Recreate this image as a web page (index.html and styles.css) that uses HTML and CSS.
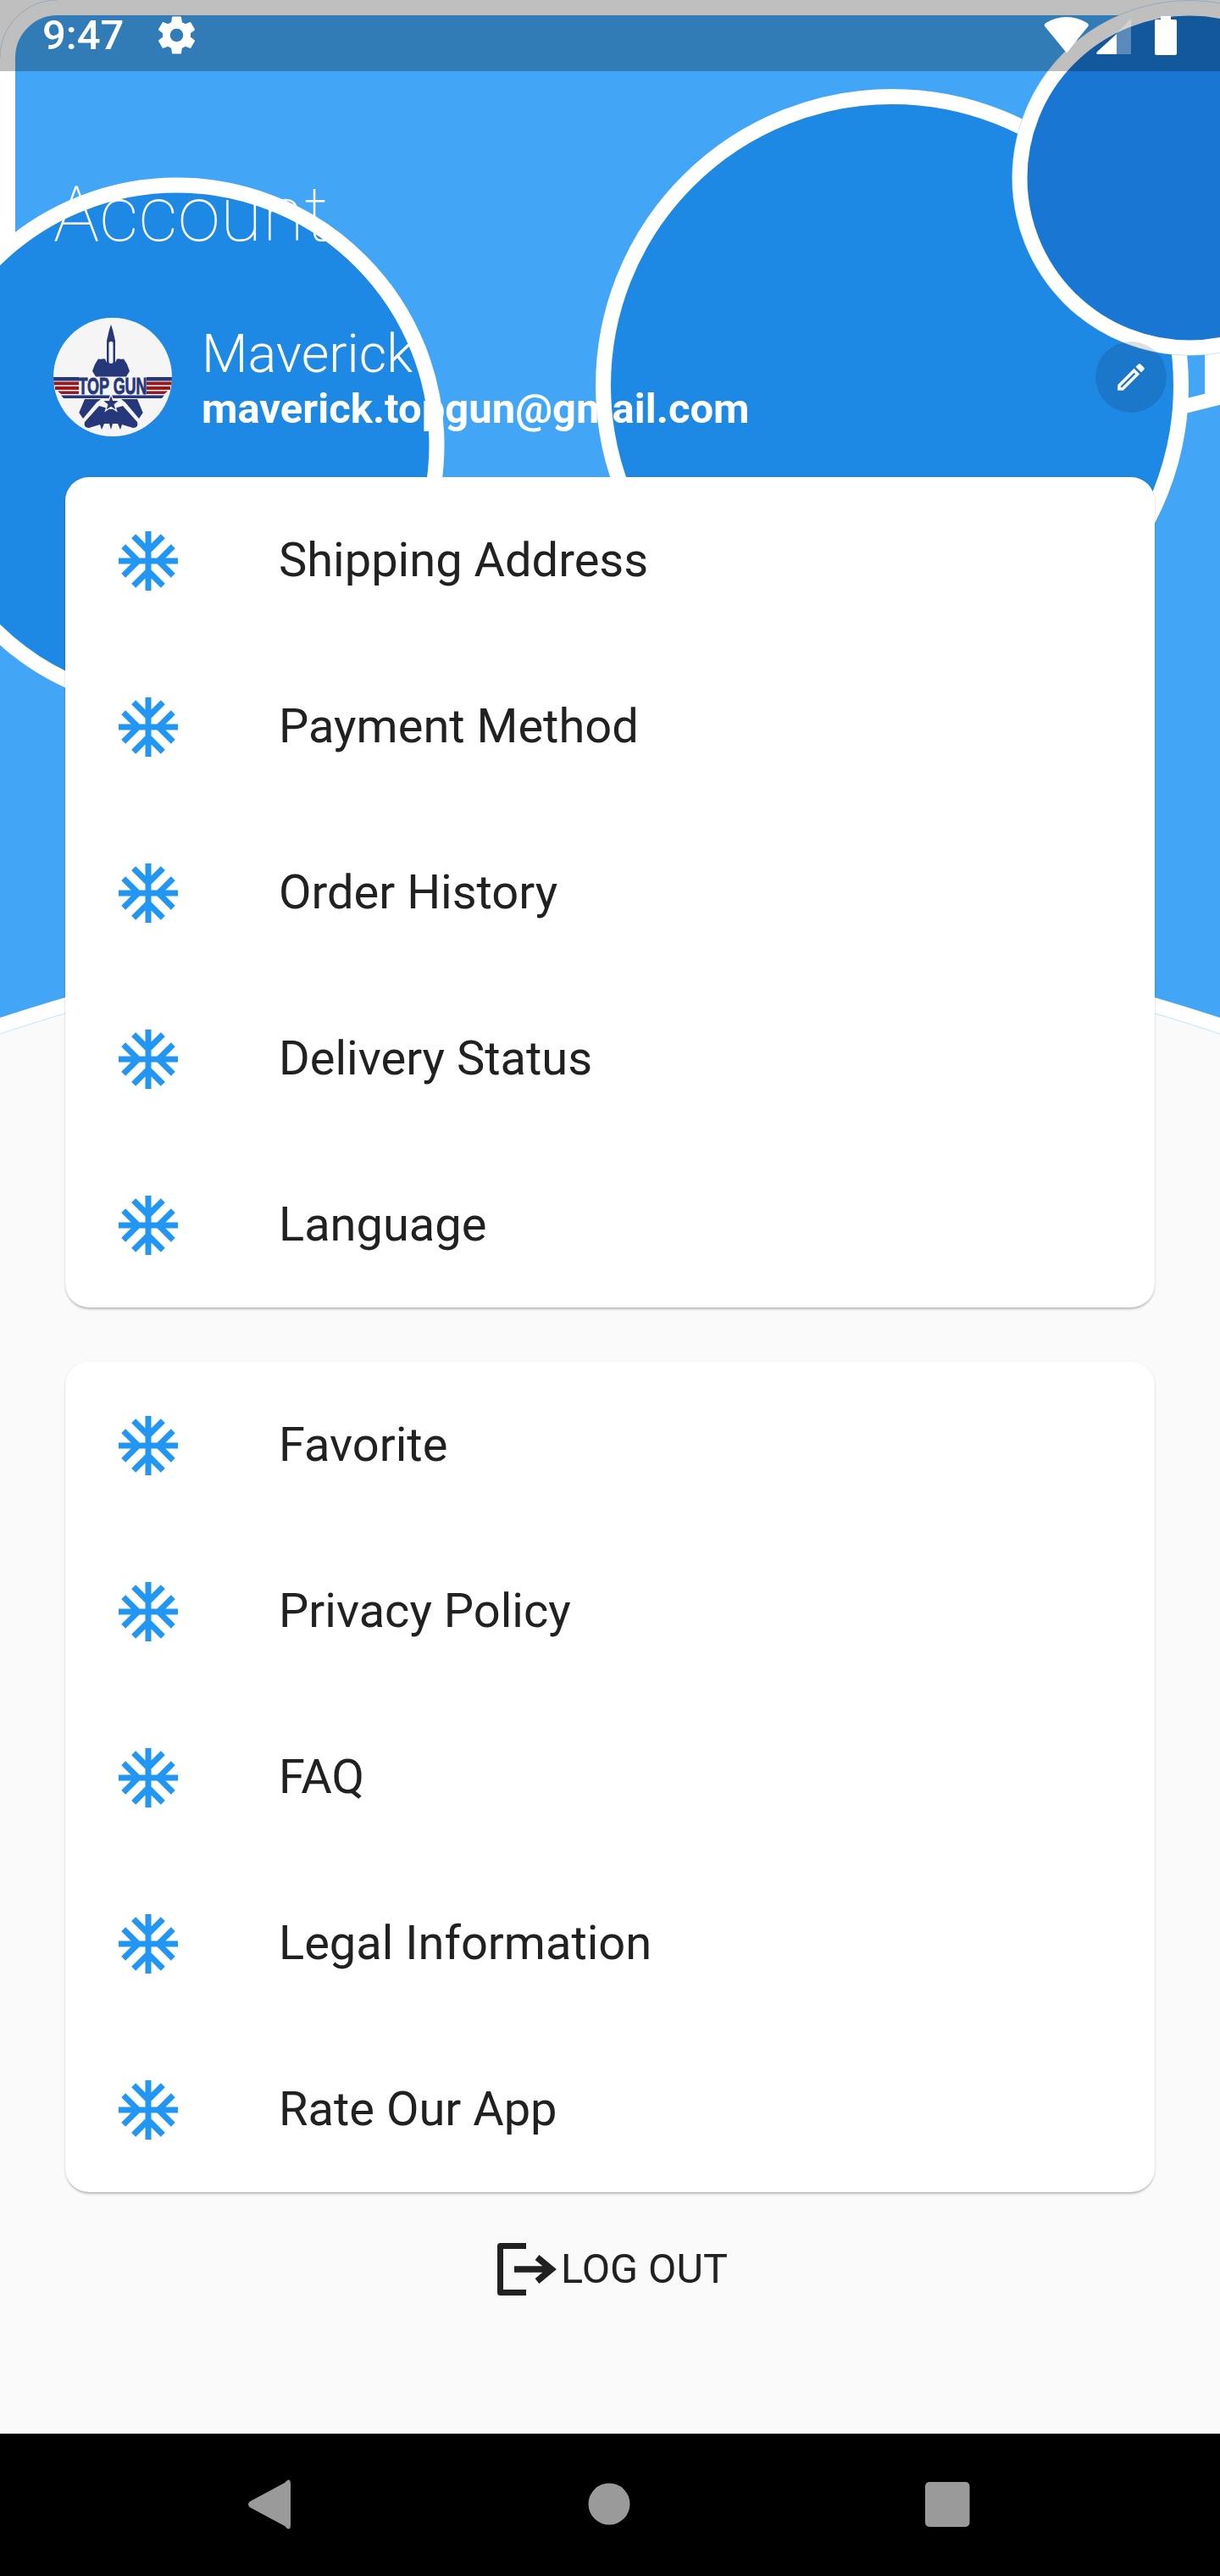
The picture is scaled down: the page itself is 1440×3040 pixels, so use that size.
FILE: index.html
```html
<!DOCTYPE html>
<html lang="en">
<head>
<meta charset="utf-8">
<title>Account</title>
<link rel="stylesheet" href="styles.css">
</head>
<body>
<svg class="art" width="1440" height="1300" viewBox="0 0 1440 1300" aria-hidden="true">
  <rect class="sky" width="1440" height="1300"/>
  <circle class="floor" cx="720" cy="3375" r="2281"/>
  <circle class="hairline" cx="720" cy="3375" r="2272"/>
  <rect class="corner" width="68" height="68"/>
  <path class="frame" d="M9 520V68A59 59 0 0 1 68 9H1431V466"/>
  <path class="hairline" d="M0 68A68 68 0 0 1 68 0"/>
  <path class="band" d="M1460 464L1380 484"/>
  <rect class="strip" x="1422" y="60" width="18" height="410"/>
  <circle class="disc" cx="209" cy="525" r="306.5"/>
  <circle class="disc" cx="1053" cy="455" r="341"/>
  <circle class="disc disc-dark" cx="1404" cy="210" r="200.5"/>
  <circle class="hairline" cx="1404" cy="210" r="209.5"/>
</svg>

<header class="status">
  <span class="time">9:47</span>
  <svg class="gear" width="53" height="53" viewBox="0 0 24 24"><path d="M19.43 12.98c.04-.32.07-.64.07-.98s-.03-.66-.07-.98l2.11-1.65c.19-.15.24-.42.12-.64l-2-3.46c-.12-.22-.39-.3-.61-.22l-2.49 1c-.52-.4-1.08-.73-1.69-.98l-.38-2.65C14.46 2.18 14.25 2 14 2h-4c-.25 0-.46.18-.49.42l-.38 2.65c-.61.25-1.17.59-1.69.98l-2.49-1c-.23-.09-.49 0-.61.22l-2 3.46c-.13.22-.07.49.12.64l2.11 1.65c-.04.32-.07.65-.07.98s.03.66.07.98l-2.11 1.65c-.19.15-.24.42-.12.64l2 3.46c.12.22.39.3.61.22l2.49-1c.52.4 1.08.73 1.69.98l.38 2.65c.03.24.24.42.49.42h4c.25 0 .46-.18.49-.42l.38-2.65c.61-.25 1.17-.59 1.69-.98l2.49 1c.23.09.49 0 .61-.22l2-3.46c.12-.22.07-.49-.12-.64l-2.11-1.65zM12 15.5c-1.93 0-3.5-1.57-3.5-3.5s1.57-3.5 3.5-3.5 3.5 1.57 3.5 3.5-1.57 3.5-3.5 3.5z"/></svg>
  <svg class="sys" width="158" height="48" viewBox="1232 18 158 48">
    <path d="M1259 62.5L1233.5 31.5Q1231.5 29 1234.5 27Q1258.5 13 1283 27Q1286 29 1284 31.5Z"/>
    <path class="sys-dim" d="M1318 39L1335 22V64H1318Z"/>
    <path d="M1318 40V64H1296Q1293 64 1295 61Z"/>
    <path d="M1370 19H1382V23H1387Q1389 23 1389 25V63Q1389 65 1387 65H1365Q1363 65 1363 63V25Q1363 23 1365 23H1370Z"/>
  </svg>
</header>

<main class="content">
  <h1 class="title">Account</h1>

  <section class="profile">
    <svg class="avatar" width="140" height="140" viewBox="0 0 140 140">
      <defs><clipPath id="avatar-clip"><circle cx="70" cy="70" r="70"/></clipPath></defs>
      <circle class="logo-bg" cx="70" cy="70" r="70"/>
      <g clip-path="url(#avatar-clip)">
        <path class="logo-navy" d="M68 8L70 14L73 27V53L75 48.5H78.5L80 49L83 48.5L87 55L90 63L86 69.5H50L46 63L49 55L53 48.5L56 49L57.5 48.5H61L63 53V27L66 14Z"/>
        <rect class="logo-white" x="65.5" y="28" width="5" height="26" rx="2"/>
        <rect class="logo-navy" x="0" y="70" width="30" height="4.5"/>
        <rect class="logo-navy" x="110" y="70" width="30" height="4.5"/>
        <rect class="logo-red" x="0" y="75.5" width="30" height="4"/>
        <rect class="logo-red" x="110" y="75.5" width="30" height="4"/>
        <rect class="logo-red" x="2" y="81" width="28" height="4"/>
        <rect class="logo-red" x="110" y="81" width="28" height="4"/>
        <path class="logo-red" d="M5 86.5H30V90H9Z"/>
        <path class="logo-red" d="M110 86.5H135L131 90H110Z"/>
        <path class="logo-navy" d="M9 91.5H131L128 95H12Z"/>
        <path class="logo-navy" d="M37 96H56L51 100L35 119L30.3 112Z"/>
        <path class="logo-navy" d="M99 96H80L85 100L101 119L105.7 112Z"/>
        <path class="logo-navy" d="M54 104L37 123Q35 130 42 130L55 126L57 132L60 125L66 125L68 132L70 125L76 125L79 132L81 126L94 130Q101 130 99 123L82 104L68 108Z"/>
        <polygon class="logo-star" points="68,90 70.6,97.4 78.5,97.6 72.3,102.4 74.5,109.9 68,105.5 61.5,109.9 63.7,102.4 57.5,97.6 65.4,97.4"/>
      </g>
      <text class="logo-text" x="29.5" y="89.5" textLength="81" lengthAdjust="spacingAndGlyphs">TOP GUN</text>
    </svg>
    <div class="who">
      <div class="name">Maverick</div>
      <div class="email">maverick.topgun@gmail.com</div>
    </div>
    <button class="edit" type="button" aria-label="Edit">
      <svg width="42" height="42" viewBox="0 0 24 24"><path d="M3 17.25V21h3.75L17.81 9.94l-3.75-3.75L3 17.25zM5.92 19H5v-.92l9.06-9.06.92.92L5.92 19zM20.71 5.63l-2.34-2.34c-.2-.2-.45-.29-.71-.29s-.51.1-.7.29l-1.83 1.83 3.75 3.75 1.83-1.83c.39-.39.39-1.02 0-1.41z"/></svg>
    </button>
  </section>

  <svg class="defs" width="0" height="0" aria-hidden="true">
    <symbol id="flake" viewBox="0 0 24 24"><path d="M22 11h-4.17l3.24-3.24-1.41-1.42L15 11h-2V9l4.66-4.66-1.42-1.41L13 6.17V2h-2v4.17L7.76 2.93 6.34 4.34 11 9v2H9L4.34 6.34 2.93 7.76 6.17 11H2v2h4.17l-3.24 3.24 1.41 1.42L9 13h2v2l-4.66 4.66 1.42 1.41L11 17.83V22h2v-4.17l3.24 3.24 1.42-1.41L13 15v-2h2l4.66 4.66 1.41-1.42L17.83 13H22z"/></symbol>
  </svg>

  <ul class="card card-first">
    <li class="row"><svg class="flake"><use href="#flake"/></svg><span>Shipping Address</span></li>
    <li class="row"><svg class="flake"><use href="#flake"/></svg><span>Payment Method</span></li>
    <li class="row"><svg class="flake"><use href="#flake"/></svg><span>Order History</span></li>
    <li class="row"><svg class="flake"><use href="#flake"/></svg><span>Delivery Status</span></li>
    <li class="row"><svg class="flake"><use href="#flake"/></svg><span>Language</span></li>
  </ul>

  <ul class="card card-second">
    <li class="row"><svg class="flake"><use href="#flake"/></svg><span>Favorite</span></li>
    <li class="row"><svg class="flake"><use href="#flake"/></svg><span>Privacy Policy</span></li>
    <li class="row"><svg class="flake"><use href="#flake"/></svg><span>FAQ</span></li>
    <li class="row"><svg class="flake"><use href="#flake"/></svg><span>Legal Information</span></li>
    <li class="row"><svg class="flake"><use href="#flake"/></svg><span>Rate Our App</span></li>
  </ul>

  <div class="logout">
    <svg width="72" height="66" viewBox="0 0 72 66"><path class="logout-bracket" d="M36 5.5H5.5V60.5H36"/><path class="logout-arrow" d="M22 33H64M49 19L66 33L49 47"/></svg>
    <span>LOG OUT</span>
  </div>
</main>

<nav class="nav">
  <svg width="1440" height="168" viewBox="0 0 1440 168">
    <path class="nav-key" d="M336 58Q343 50 343 60V107Q343 117 336 109L295 87Q291 83.5 295 80Z"/>
    <circle class="nav-key" cx="719" cy="83" r="24.5"/>
    <rect class="nav-key" x="1092" y="57" width="52.5" height="53" rx="5"/>
  </svg>
</nav>
</body>
</html>
```

FILE: styles.css
```css
* { box-sizing: border-box; }
html, body { margin: 0; padding: 0; }
body {
  position: relative;
  width: 1440px;
  height: 3040px;
  display: flex;
  flex-direction: column;
  background: #fafafa;
  font-family: Roboto, "Liberation Sans", sans-serif;
  color: #212121;
  overflow: hidden;
}

.art { position: absolute; left: 0; top: 0; }
.sky { fill: #42a5f5; }
.floor { fill: #fafafa; stroke: #fff; stroke-width: 18; }
.hairline { fill: none; stroke: #42a5f5; stroke-opacity: .3; stroke-width: 1; }
.corner { fill: #fff; }
.frame { fill: #42a5f5; stroke: #fff; stroke-width: 18; }
.band { fill: none; stroke: #fff; stroke-width: 17; }
.strip { fill: #fff; }
.disc { fill: #1e88e5; stroke: #fff; stroke-width: 18; }
.disc-dark { fill: #1976d2; }

.status {
  position: relative;
  flex: none;
  height: 84px;
  display: flex;
  align-items: center;
  padding: 0 50px;
  background: rgba(0, 0, 0, .25);
  color: #fff;
}
.time { font-size: 49px; font-weight: 500; line-height: 84px; width: 132px; }
.gear { fill: #fff; margin-top: -1px; }
.sys { fill: #fff; margin-left: auto; }
.sys-dim { opacity: .3; }

.content { position: relative; flex: 1; display: flex; flex-direction: column; }

.title {
  margin: 116px 0 0 63px;
  font-size: 91px;
  font-weight: 100;
  line-height: 107px;
  color: #fff;
}

.profile {
  display: flex;
  align-items: flex-start;
  margin: 68px 63px 0;
  height: 188px;
}
.avatar { flex: none; }
.logo-bg { fill: #f5f5f5; }
.logo-navy { fill: #27387a; }
.logo-red { fill: #951a1d; }
.logo-white { fill: #f5f5f5; }
.logo-star { fill: #27387a; stroke: #f5f5f5; stroke-width: 1.4; }
.logo-text {
  font-family: "Liberation Sans Narrow", "Liberation Sans", sans-serif;
  font-size: 27px;
  font-weight: 700;
  fill: #27387a;
  stroke: #27387a;
  stroke-width: .9;
}

.who { margin: 7px 0 0 35px; color: #fff; }
.name { font-size: 63px; font-weight: 300; line-height: 72px; }
.email { font-size: 49px; font-weight: 700; line-height: 57px; }

.edit {
  flex: none;
  width: 84px;
  height: 84px;
  margin: 28px 0 0 auto;
  padding: 0;
  display: flex;
  align-items: center;
  justify-content: center;
  border: 0;
  border-radius: 50%;
  background: rgba(0, 0, 0, .12);
}
.edit svg { fill: #fff; }

.defs { position: absolute; }

.card {
  list-style: none;
  margin: 0 77px;
  padding: 0;
  background: #fff;
  border-radius: 28px;
  box-shadow: 0 3px 3px -1px rgba(0, 0, 0, .2), 0 1px 3px 0 rgba(0, 0, 0, .12);
}
.card-second { margin-top: 64px; }

.row {
  display: flex;
  align-items: center;
  gap: 112px;
  height: 196px;
  padding-left: 56px;
  font-size: 56px;
  line-height: 66px;
}
.flake { width: 84px; height: 84px; margin-top: 2px; fill: #2196f3; flex: none; }

.logout {
  display: flex;
  align-items: center;
  justify-content: center;
  gap: 5px;
  margin-top: 58px;
  padding-left: 4px;
  font-size: 48.5px;
  line-height: 66px;
}
.logout-bracket { fill: none; stroke: #212121; stroke-width: 7; stroke-linejoin: round; }
.logout-arrow { fill: none; stroke: #212121; stroke-width: 7.5; }

.nav { flex: none; height: 168px; background: #000; line-height: 0; }
.nav-key { fill: #9a9a9a; }
```
